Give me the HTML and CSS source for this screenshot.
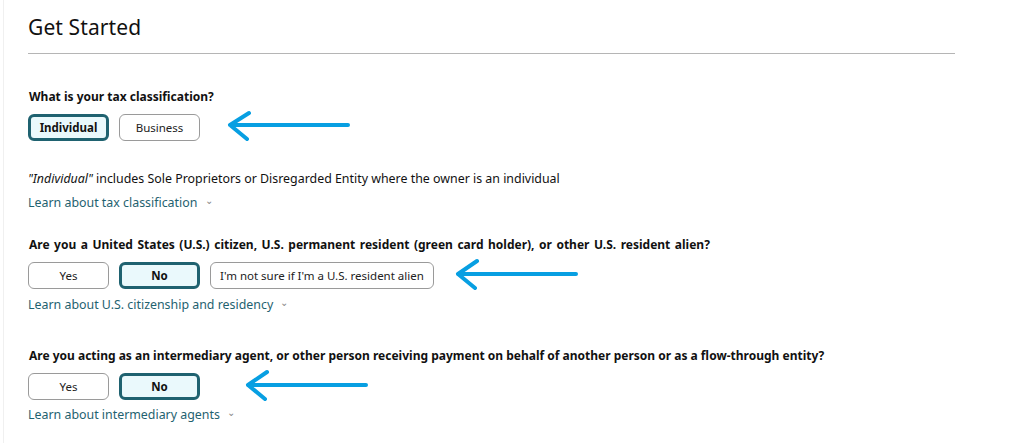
FILE: index.html
```html
<!DOCTYPE html>
<html lang="en">
<head>
<meta charset="utf-8">
<title>Get Started</title>
<link rel="stylesheet" href="styles.css">
</head>
<body>
<div class="page">
  <h1 class="title">Get Started</h1>
  <hr class="rule">

  <section class="block block-first">
    <p class="question">What is your tax classification?</p>
    <div class="choices">
      <button class="choice selected">Individual</button>
      <button class="choice">Business</button>
      <svg class="pointer pointer-a" width="124" height="34" viewBox="0 0 124 34"><path d="M4 15 H122 M4 15 L23 3 M4 15 L21 29" /></svg>
    </div>
    <p class="note"><em>"Individual"</em> includes Sole Proprietors or Disregarded Entity where the owner is an individual</p>
    <a class="learn" href="#">Learn about tax classification <span class="caret">&#8964;</span></a>
  </section>

  <section class="block block-second">
    <p class="question spaced">Are you a United States (U.S.) citizen, U.S. permanent resident (green card holder), or other U.S. resident alien?</p>
    <div class="choices">
      <button class="choice">Yes</button>
      <button class="choice selected">No</button>
      <button class="choice wide">I'm not sure if I'm a U.S. resident alien</button>
      <svg class="pointer pointer-b" width="124" height="34" viewBox="0 0 124 34"><path d="M4 16 H122 M4 16 L23 3 M4 16 L21 30" /></svg>
    </div>
    <a class="learn tight" href="#">Learn about U.S. citizenship and residency <span class="caret">&#8964;</span></a>
  </section>

  <section class="block block-third">
    <p class="question">Are you acting as an intermediary agent, or other person receiving payment on behalf of another person or as a flow-through entity?</p>
    <div class="choices">
      <button class="choice">Yes</button>
      <button class="choice selected">No</button>
      <svg class="pointer pointer-c" width="124" height="34" viewBox="0 0 124 34"><path d="M4 16 H122 M4 16 L23 3 M4 16 L21 30" /></svg>
    </div>
    <a class="learn tight" href="#">Learn about intermediary agents <span class="caret">&#8964;</span></a>
  </section>
</div>
</body>
</html>
```

FILE: styles.css
```css
html, body {
  margin: 0;
  padding: 0;
  background: #fff;
}

body {
  font-family: "Noto Sans", "Open Sans", Arial, sans-serif;
  color: #111;
  font-size: 12.4px;
  border-left: 1px solid #f0f0f0;
  margin-left: 3px;
  min-height: 443px;
  box-sizing: border-box;
}

.page {
  padding: 13px 0 0 24px;
  width: 927px;
}

.title {
  margin: 0;
  font-size: 21px;
  font-weight: 400;
  line-height: 28px;
  color: #111;
  letter-spacing: 0.1px;
}

.rule {
  margin: 12px 0 0 0;
  border: 0;
  border-top: 1px solid #b5b5b5;
  height: 0;
}

.block {
  display: flex;
  flex-direction: column;
  align-items: flex-start;
}

.block-first { margin-top: 34px; }
.block-second { margin-top: 24px; }
.block-third { margin-top: 33px; }

.question {
  margin: 0 0 0 1px;
  font-weight: 700;
  font-size: 12px;
  line-height: 18px;
  color: #111;
}

.question.spaced {
  word-spacing: 1.4px;
}

.choices {
  display: flex;
  align-items: center;
  gap: 10px;
  margin-top: 4px;
}

.block-third .choices {
  margin-top: 4px;
}

.choice {
  font-family: inherit;
  font-size: 11.5px;
  color: #222;
  width: 81px;
  height: 27px;
  padding: 0;
  background: #fff;
  border: 1px solid #9a9a9a;
  border-radius: 6px;
  box-sizing: border-box;
}

.choice.selected {
  font-weight: 700;
  color: #111;
  background: #eaf9fc;
  border: 3px solid #1f6270;
  border-radius: 6px;
}

.choice.wide {
  width: auto;
  padding: 0 9px;
}

.pointer {
  fill: none;
  stroke: #079fe2;
  stroke-width: 4;
  stroke-linecap: round;
  stroke-linejoin: round;
}

.pointer-a { margin-left: 16px; }
.pointer-b { margin-left: 10px; }
.pointer-c { margin-left: 34px; }

.note {
  margin: 26px 0 0 0;
  line-height: 18px;
  color: #111;
}

.note em {
  font-style: italic;
}

.learn {
  margin-top: 6px;
  color: #1f6270;
  text-decoration: none;
  line-height: 18px;
}

.learn.tight {
  margin-top: 4px;
}

.block-third .learn.tight {
  margin-top: 3px;
}

.caret {
  display: inline-block;
  font-size: 10px;
  color: #888;
  margin-left: 4px;
  transform: translateY(-3px);
}
```
